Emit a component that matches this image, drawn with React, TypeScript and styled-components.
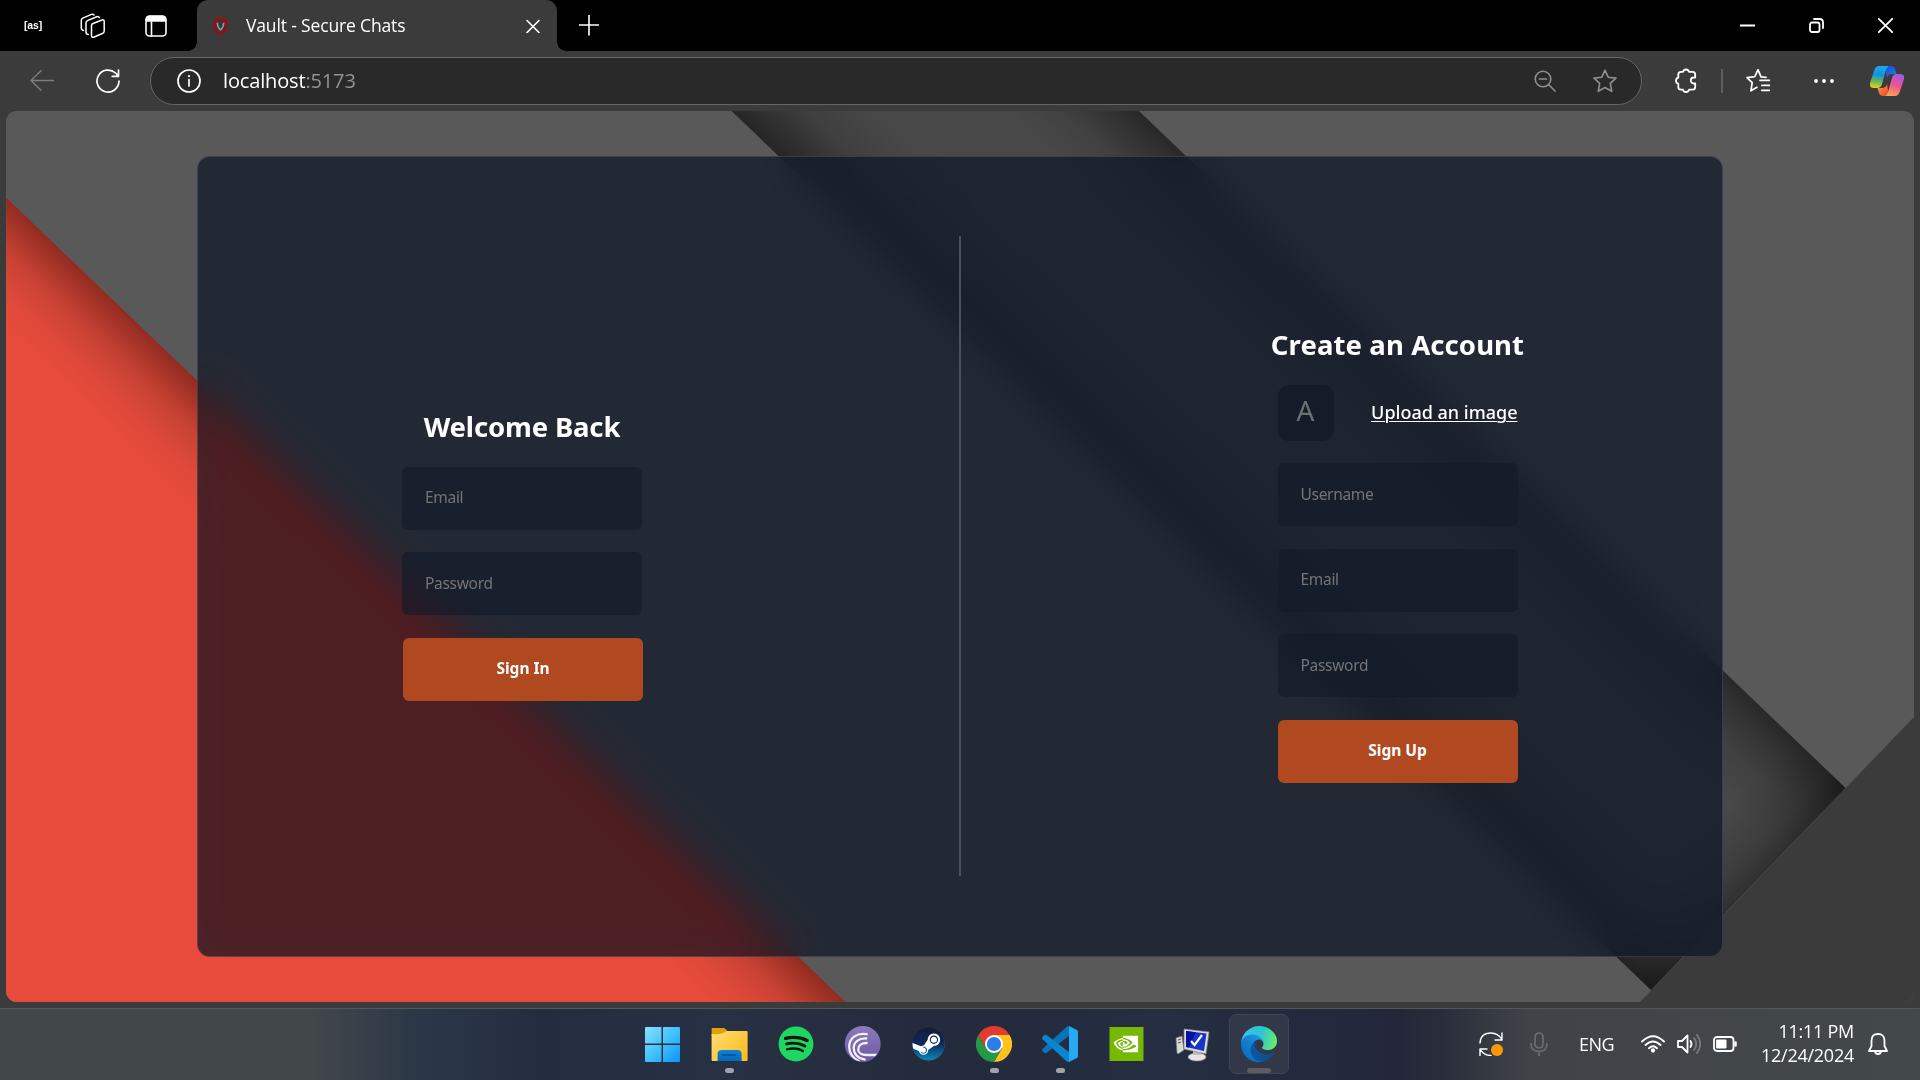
import React from "react";
import styled, { createGlobalStyle } from "styled-components";
import { SiBittorrent, SiNvidia } from "react-icons/si";
import { FaSpotify, FaSteam } from "react-icons/fa";

const ui = `"Open Sans", "Noto Sans", sans-serif`;
const humanist = `"Noto Sans", "Open Sans", sans-serif`;

const GlobalStyle = createGlobalStyle`
  * { box-sizing: border-box; }
  html, body { margin: 0; background: #3b3b3b; overflow: hidden; }
  button, input { font: inherit; border: 0; outline: 0; }
  svg { display: block; flex: none; }
`;

const Desktop = styled.div`
  width: 1920px;
  height: 1080px;
  display: flex;
  flex-direction: column;
  background: #3b3b3b;
  color: #fff;
  font-family: ${ui};
`;

const TitleBar = styled.header`
  height: 51px;
  display: flex;
  align-items: center;
  background: #000;
`;

const Slot = styled.span<{ $before?: number; $width: number }>`
  flex: none;
  display: flex;
  justify-content: center;
  margin-left: ${(p) => p.$before ?? 0}px;
  width: ${(p) => p.$width}px;
`;

const Profile = styled(Slot)`
  padding-bottom: 2px;
  font-family: "Liberation Sans Narrow", "Liberation Sans", sans-serif;
  font-size: 10.5px;
  font-weight: 700;
  line-height: 14px;
  letter-spacing: -0.2px;
  white-space: nowrap;
`;

const TabFlank = styled.i<{ $side: "left" | "right" }>`
  align-self: flex-end;
  width: 9px;
  height: 9px;
  margin-left: ${(p) => (p.$side === "left" ? 21 : 0)}px;
  background: radial-gradient(
    circle at ${(p) => (p.$side === "left" ? "0 0" : "100% 0")},
    transparent 8.5px,
    #3b3b3b 9px
  );
`;

const Tab = styled.div`
  width: 360px;
  height: 51px;
  padding: 0 17px 0 16px;
  border-radius: 11px 11px 0 0;
  background: #3b3b3b;
  display: flex;
  align-items: center;
`;

const TabTitle = styled.span`
  flex: 1;
  margin-left: 18px;
  padding-bottom: 1px;
  font-size: 17.5px;
  letter-spacing: -0.15px;
  white-space: nowrap;
`;

const Spacer = styled.span`
  flex: 1;
`;

const WindowButtons = styled.div`
  display: flex;
  align-items: center;
  padding-right: 27px;
`;

const Toolbar = styled.div`
  height: 60px;
  padding-right: 16px;
  display: flex;
  align-items: center;
`;

const AddressBar = styled.div`
  flex: 1;
  height: 48px;
  margin-left: 30px;
  padding: 0 24px 0 26px;
  border: 1.5px solid #666;
  border-radius: 24px;
  background: #292929;
  display: flex;
  align-items: center;
`;

const Url = styled.span`
  flex: 1;
  margin-left: 22px;
  padding-bottom: 1px;
  font-size: 20px;
  letter-spacing: -0.15px;
`;

const Port = styled.span`
  color: #919191;
`;

const Rule = styled.i`
  width: 2px;
  height: 24px;
  margin-left: 24px;
  background: #5e5e5e;
`;

const Viewport = styled.main`
  position: relative;
  width: 1908px;
  height: 891px;
  margin: 0 6px 6px;
  padding-bottom: 1px;
  border-radius: 11px;
  overflow: hidden;
  background: #595959;
  display: flex;
  align-items: center;
  justify-content: center;
`;

const Wallpaper = styled.svg`
  position: absolute;
  inset: 0;
`;

const Card = styled.section`
  width: 1526px;
  height: 801px;
  display: flex;
  align-items: center;
  border: 1px solid rgba(255, 255, 255, 0.125);
  border-radius: 13px;
  background: rgba(17, 25, 40, 0.75);
  backdrop-filter: blur(19px) saturate(180%);
  font-family: ${humanist};
`;

const Pane = styled.div<{ $side: "left" | "right" }>`
  width: 761px;
  display: flex;
  flex-direction: column;
  align-items: center;
  padding: ${(p) => (p.$side === "left" ? "0 113px 3px 0" : "0 0 3px 112px")};
`;

const Separator = styled.i`
  width: 2px;
  height: 640px;
  background: #4b5059;
`;

const Heading = styled.h2<{ $spacing: number }>`
  margin: 0 0 22px;
  font-size: 27.5px;
  line-height: 36px;
  font-weight: 700;
  letter-spacing: ${(p) => p.$spacing}px;
  white-space: nowrap;
`;

const Form = styled.form`
  width: 240px;
  display: flex;
  flex-direction: column;
  gap: 22.5px;
`;

const Field = styled.input`
  width: 240px;
  height: 63px;
  padding: 0 23px 2px;
  border-radius: 6px;
  background: rgba(17, 25, 40, 0.6);
  color: #fff;
  font-size: 15.5px;
  letter-spacing: -0.3px;
  &::placeholder {
    color: #757575;
    opacity: 1;
  }
`;

const Submit = styled.button<{ $shift?: number }>`
  width: 240px;
  height: 63px;
  margin-left: ${(p) => p.$shift ?? 0}px;
  padding: 0 0 3px;
  border-radius: 6px;
  background: #b04820;
  color: #fff;
  font-size: 15.5px;
  font-weight: 700;
`;

const AvatarRow = styled.label`
  height: 56px;
  display: flex;
  align-items: center;
  justify-content: space-between;
`;

const Avatar = styled.span`
  width: 56px;
  height: 56px;
  border-radius: 11px;
  background: rgba(17, 25, 40, 0.7);
  color: #6d6f73;
  font-size: 28px;
  line-height: 51px;
  text-align: center;
`;

const UploadText = styled.span`
  font-size: 18px;
  font-weight: 500;
  line-height: 24px;
  padding-bottom: 1px;
  text-decoration: underline;
  text-decoration-thickness: 1px;
  text-underline-offset: 2px;
  white-space: nowrap;
`;

const Taskbar = styled.footer`
  height: 72px;
  display: flex;
  align-items: stretch;
  border-top: 1px solid #54575a;
  background: linear-gradient(
    90deg,
    #42474a 0,
    #42474a 310px,
    #2b3747 420px,
    #242d40 540px,
    #283143 720px,
    #232a3b 960px,
    #252e42 1160px,
    #232739 1400px,
    #2a2e3b 1445px,
    #404448 1530px,
    #43484b 1920px
  );
`;

const Apps = styled.nav`
  display: flex;
  margin-left: 630px;
`;

const AppCell = styled.div`
  width: 66.2px;
  display: flex;
  justify-content: center;
`;

const Tile = styled.div<{ $active?: boolean }>`
  width: 60px;
  height: 60px;
  margin-top: 5px;
  padding-top: 11px;
  border-radius: 7px;
  border: 1px solid ${(p) => (p.$active ? "#3e4656" : "transparent")};
  background: ${(p) => (p.$active ? "#323848" : "transparent")};
  display: flex;
  flex-direction: column;
  align-items: center;
  justify-content: space-between;
`;

const Running = styled.i<{ $state: "none" | "open" | "active" }>`
  width: ${(p) => (p.$state === "active" ? 24 : 9)}px;
  height: 5px;
  border-radius: 3px;
  background: ${(p) =>
    p.$state === "none" ? "transparent" : p.$state === "open" ? "#9fa3ab" : "#5f5d5b"};
`;

const Tray = styled.div`
  flex: 1;
  display: flex;
  align-items: center;
  justify-content: flex-end;
  padding: 0 32px 2px 0;
  font-size: 18px;
`;

const Language = styled(Slot)`
  letter-spacing: -0.6px;
`;

const Clock = styled.div`
  width: 117px;
  text-align: right;
  line-height: 24px;
  font-size: 18px;
  letter-spacing: -0.25px;
  margin-bottom: 2px;
`;

type LineProps = {
  w: number;
  h: number;
  stroke?: string;
  width?: number;
  children: React.ReactNode;
};

const Line = ({ w, h, stroke = "#fff", width = 1.6, children }: LineProps) => (
  <svg
    width={w}
    height={h}
    viewBox={`0 0 ${w} ${h}`}
    fill="none"
    stroke={stroke}
    strokeWidth={width}
    strokeLinecap="round"
    strokeLinejoin="round"
  >
    {children}
  </svg>
);

const STAR = "M12 1.2l3.2 7 7.8.9-5.7 5.3 1.5 7.9L12 18.5l-6.8 3.8 1.5-7.9L1 9.1l7.8-.9z";

const CODE =
  "M23.15 2.587L18.21.21a1.494 1.494 0 0 0-1.705.29l-9.46 8.63-4.12-3.128a.999.999 0 0 0-1.276.057L.327 7.261A1 1 0 0 0 .326 8.740L3.899 12 .326 15.260a1 1 0 0 0 .001 1.479L1.650 17.940a.999.999 0 0 0 1.276.057l4.120-3.128 9.460 8.630a1.492 1.492 0 0 0 1.704.29l4.942-2.377A1.500 1.500 0 0 0 24 20.060V3.939a1.500 1.500 0 0 0-.85-1.352zm-5.146 14.861L10.826 12l7.178-5.448v10.896z";

const Background = () => (
  <Wallpaper width="1908" height="891" viewBox="6 111 1908 891">
    <defs>
      <linearGradient id="redEdge" gradientUnits="userSpaceOnUse" x1="426" y1="599" x2="357" y2="671">
        <stop offset="0" stopColor="#922a20" />
        <stop offset=".12" stopColor="#a13226" />
        <stop offset=".4" stopColor="#c84234" />
        <stop offset=".7" stopColor="#de4939" />
        <stop offset="1" stopColor="#e84b3b" />
      </linearGradient>
      <linearGradient id="band" gradientUnits="userSpaceOnUse" x1="1139" y1="111" x2="944.4" y2="314.3">
        <stop offset="0" stopColor="#282828" />
        <stop offset=".07" stopColor="#323232" />
        <stop offset=".18" stopColor="#404040" />
        <stop offset=".32" stopColor="#484848" />
        <stop offset=".65" stopColor="#484848" />
        <stop offset=".82" stopColor="#3f3f3f" />
        <stop offset=".94" stopColor="#2e2e2e" />
        <stop offset="1" stopColor="#262626" />
      </linearGradient>
      <linearGradient id="corner" gradientUnits="userSpaceOnUse" x1="1748" y1="889" x2="1697" y2="840">
        <stop offset="0" stopColor="#000" stopOpacity=".34" />
        <stop offset=".35" stopColor="#000" stopOpacity=".15" />
        <stop offset="1" stopColor="#000" stopOpacity="0" />
      </linearGradient>
    </defs>
    <rect x="6" y="111" width="1908" height="891" fill="#595959" />
    <path d="M6 197.500 L845.500 1002 H6z" fill="url(#redEdge)" />
    <path d="M731.500 111 H1139 L1845.500 788 L1651 990z" fill="url(#band)" />
    <path d="M731.500 111 H1139 L1845.500 788 L1651 990z" fill="url(#corner)" />
    <path d="M1914 717 V1002 H1640z" fill="#3b3b3b" />
  </Wallpaper>
);

const StartIcon = () => (
  <svg width="36" height="36" viewBox="0.5 0 36 36">
    <defs>
      <linearGradient id="win" x1="0" y1="0" x2="36" y2="36" gradientUnits="userSpaceOnUse">
        <stop offset="0" stopColor="#8be2ff" />
        <stop offset=".5" stopColor="#43c2fb" />
        <stop offset="1" stopColor="#0a93fa" />
      </linearGradient>
    </defs>
    <path d="M1.500 1H17v16.500H.5V2a1 1 0 0 1 1-1zM18.500 1H34.500a1 1 0 0 1 1 1V17.500h-17zM.5 19H17v17H1.500a1 1 0 0 1-1-1zM18.500 19h17v16a1 1 0 0 1-1 1h-16z" fill="url(#win)" />
  </svg>
);

const FolderIcon = () => (
  <svg width="36" height="36" viewBox="-0.6 0 36 36" overflow="visible">
    <defs>
      <linearGradient id="fold" x1="0" y1="6" x2="36" y2="35" gradientUnits="userSpaceOnUse">
        <stop offset="0" stopColor="#ffdc70" />
        <stop offset="1" stopColor="#fdbb1c" />
      </linearGradient>
      <linearGradient id="foldBlue" x1="0" y1="24" x2="0" y2="35" gradientUnits="userSpaceOnUse">
        <stop offset="0" stopColor="#0d83da" />
        <stop offset="1" stopColor="#0667b8" />
      </linearGradient>
    </defs>
    <path d="M1 2h11q1.500 0 2.500 1.500L16 6v4H0V3a1 1 0 0 1 1-1z" fill="#e0a00a" />
    <path d="M0 8q7 .5 10-.5t5-2.500h20a1 1 0 0 1 1 1v28a1 1 0 0 1-1 1H1a1 1 0 0 1-1-1z" fill="url(#fold)" />
    <path d="M6 35v-7q0-4 4-4h16q4 0 4 4v7z" fill="url(#foldBlue)" />
    <path d="M11 29h14" stroke="#064d91" strokeWidth="1.600" strokeLinecap="round" />
  </svg>
);

const SpotifyIcon = () => (
  <svg width="36" height="36" viewBox="-1 0 36 36" overflow="visible">
    <circle cx="18" cy="18" r="15" fill="#101712" />
    <FaSpotify size={36} color="#1ed760" />
  </svg>
);

const BitTorrentIcon = () => (
  <svg width="36" height="36" viewBox="-0.7 0 36 36" overflow="visible">
    <defs>
      <linearGradient id="bt" x1="0" y1="0" x2="0" y2="36" gradientUnits="userSpaceOnUse">
        <stop offset="0" stopColor="#8d7bbb" />
        <stop offset="1" stopColor="#6b58a5" />
      </linearGradient>
      <clipPath id="btClip">
        <circle cx="18" cy="18" r="17.500" />
      </clipPath>
    </defs>
    <circle cx="18" cy="18" r="18" fill="url(#bt)" />
    <g clipPath="url(#btClip)" fill="none" stroke="#f1eff8" strokeWidth="2.300" strokeLinecap="round">
      <path d="M22 8.200C12 6.500 4.500 12 4.500 21c0 6 4 11.500 9.500 14" />
      <path d="M21.500 12.500C14 12 9 16 9 22c0 5.500 4 10.500 11 11.500" />
      <path d="M22 17c-5 0-8.500 2.500-8.500 6.500 0 3.500 3.500 5.500 8 5.500h11" />
    </g>
  </svg>
);

const SteamIcon = () => (
  <svg width="36" height="36" viewBox="-1.5 -1 36 36">
    <defs>
      <linearGradient id="steam" x1="0" y1="0" x2="0" y2="500" gradientUnits="userSpaceOnUse">
        <stop offset="0" stopColor="#151a33" />
        <stop offset=".5" stopColor="#0d2a5c" />
        <stop offset="1" stopColor="#0c86b8" />
      </linearGradient>
    </defs>
    <circle cx="17" cy="17" r="16" fill="#fff" />
    <FaSteam size={34} fill="url(#steam)" />
  </svg>
);

const ChromeIcon = () => (
  <svg width="36" height="36" viewBox="0 0 36 36">
    <path d="M18 9h15.600A18 18 0 0 1 18 36l7.800-13.500z" fill="#fcc31e" />
    <path d="M10.200 22.500L2.400 9A18 18 0 0 0 18 36l7.800-13.500z" fill="#279847" />
    <path d="M2.400 9l7.800 13.500L18 9h15.600A18 18 0 0 0 2.400 9z" fill="#e33b2e" />
    <circle cx="18" cy="18" r="9" fill="#fff" />
    <circle cx="18" cy="18" r="7.100" fill="#2b7de9" />
  </svg>
);

const CodeIcon = () => (
  <svg width="36" height="36" viewBox="0 0 24 24">
    <defs>
      <clipPath id="codeRight">
        <path d="M18 0h6v24h-6z" />
      </clipPath>
    </defs>
    <path d={CODE} fill="#0a74b9" />
    <path d="M.33 7.260L1.650 6.060a1 1 0 0 1 1.280-.06L18 17.450V24l-1.500-.5L.33 8.740a1 1 0 0 1 0-1.480z" fill="#0a86d0" />
    <path d={CODE} fill="#27a9f3" clipPath="url(#codeRight)" />
  </svg>
);

const NvidiaIcon = () => (
  <svg width="36" height="36" viewBox="0 0 36 36">
    <rect x="1.500" y="1" width="34" height="34" fill="#76b900" />
    <svg x="5.500" y="5.500" width="25" height="25">
      <SiNvidia size={25} color="#fff" />
    </svg>
  </svg>
);

const ComputerIcon = () => (
  <svg width="36" height="36" viewBox="0 0 36 36">
    <path d="M1 12l6-2 2 14-6 4-1-1z" fill="#d9d9d9" stroke="#777" strokeWidth=".7" />
    <path d="M3 14l3-1M3 17l3-1" stroke="#555" strokeWidth="1" />
    <ellipse cx="22" cy="31" rx="9" ry="4" fill="#e6e6e6" stroke="#888" strokeWidth=".6" />
    <path d="M18 23h8v6h-8z" fill="#bdbdbd" />
    <path d="M9 3l25 3-3 22-22-5z" fill="#dcdcdc" stroke="#888" strokeWidth=".7" />
    <path d="M11 5l20.500 2.500-2.500 17.500-18-4z" fill="#1634c9" />
    <path d="M11 5l10 1.300L14 21.500l-3-.6z" fill="#0712a0" />
    <path d="M16 15l3.500 4L27 9" fill="none" stroke="#fff" strokeWidth="2.200" />
  </svg>
);

const EdgeIcon = () => (
  <svg width="36" height="36" viewBox="4.6 4.6 256 256">
    <defs>
      <linearGradient id="edgeDark" x1="63" y1="178" x2="241" y2="178" gradientUnits="userSpaceOnUse">
        <stop offset="0" stopColor="#0c59a4" />
        <stop offset="1" stopColor="#114a8b" />
      </linearGradient>
      <linearGradient id="edgeBlue" x1="157" y1="80" x2="46" y2="221" gradientUnits="userSpaceOnUse">
        <stop offset="0" stopColor="#1b9de2" />
        <stop offset=".5" stopColor="#127fce" />
        <stop offset="1" stopColor="#0a72c8" />
      </linearGradient>
      <linearGradient id="edgeGreen" x1="20" y1="60" x2="250" y2="130" gradientUnits="userSpaceOnUse">
        <stop offset="0" stopColor="#35c1f1" />
        <stop offset=".5" stopColor="#2fc3d3" />
        <stop offset="1" stopColor="#66eb6e" />
      </linearGradient>
    </defs>
    <path
      d="M235.680 195.460a93.730 93.730 0 0 1-10.540 4.710 101.870 101.870 0 0 1-35.900 6.460c-47.320 0-88.540-32.550-88.540-74.320A31.480 31.480 0 0 1 117.130 105c-42.800 1.800-53.800 46.400-53.800 72.530 0 73.880 68.090 81.370 82.760 81.370 7.910 0 19.840-2.300 27-4.560l1.310-.44a128.340 128.340 0 0 0 66.600-52.800 4 4 0 0 0-5.320-5.640z"
      fill="url(#edgeDark)"
    />
    <path
      d="M110.340 246.340A79.200 79.200 0 0 1 87.600 225a80.720 80.720 0 0 1 29.530-120c3.120-1.470 8.450-4.130 15.540-4a32.350 32.350 0 0 1 25.690 13 31.880 31.880 0 0 1 6.360 18.660c0-.21 24.460-79.600-80-79.600-43.900 0-80 41.660-80 78.210a130.150 130.150 0 0 0 12.110 56 128 128 0 0 0 156.380 67.110 75.550 75.550 0 0 1-62.780-8z"
      fill="url(#edgeBlue)"
    />
    <path
      d="M156.940 153.780c-.81 1.050-3.300 2.500-3.300 5.660 0 2.610 1.700 5.120 4.720 7.230 14.380 10 41.490 8.680 41.560 8.680a59.560 59.560 0 0 0 30.270-8.350A61.380 61.380 0 0 0 260.660 114c.26-22.410-8-37.310-11.340-43.910-21.190-41.400-66.880-65.200-116.590-65.200a128 128 0 0 0-128 126.200c.48-36.540 36.800-66.050 80-66.050 3.500 0 23.460.34 42 10.070 16.340 8.580 24.900 18.940 30.850 29.210 6.180 10.670 7.280 24.150 7.280 29.520s-2.740 13.330-7.940 20.100z"
      fill="url(#edgeGreen)"
    />
  </svg>
);

const CopilotIcon = () => (
  <svg width="34" height="30" viewBox="0 0 34 30">
    <defs>
      <linearGradient id="cpA" x1="8" y1="0" x2="5" y2="22" gradientUnits="userSpaceOnUse">
        <stop offset="0" stopColor="#1ba6f3" />
        <stop offset=".4" stopColor="#1493dc" />
        <stop offset=".7" stopColor="#66b957" />
        <stop offset="1" stopColor="#f7cb12" />
      </linearGradient>
      <linearGradient id="cpB" x1="30" y1="8" x2="22" y2="30" gradientUnits="userSpaceOnUse">
        <stop offset="0" stopColor="#9f5bea" />
        <stop offset=".5" stopColor="#ee5095" />
        <stop offset="1" stopColor="#fda052" />
      </linearGradient>
      <linearGradient id="cpC" x1="18" y1="0" x2="26" y2="9" gradientUnits="userSpaceOnUse">
        <stop offset="0" stopColor="#1f4fd8" />
        <stop offset="1" stopColor="#1c7cec" />
      </linearGradient>
      <linearGradient id="cpD" x1="9" y1="22" x2="17" y2="30" gradientUnits="userSpaceOnUse">
        <stop offset="0" stopColor="#fb8a3c" />
        <stop offset="1" stopColor="#ee4432" />
      </linearGradient>
    </defs>
    <path d="M15 0h6q3 0 4 3l1.500 5H22q-4 0-5 4z" fill="url(#cpC)" />
    <path d="M19 30h-6q-3 0-4-3l-1.500-5H12q4 0 5-4z" fill="url(#cpD)" />
    <path d="M9 0h10q-2 .5-3 4l-4 14q-1 4-5 4H4q-5 0-4-5L4 5Q5.500 0 9 0z" fill="url(#cpA)" />
    <path d="M25 30H15q2-.5 3-4l4-14q1-4 5-4h3q5 0 4 5l-4 12q-1.500 5-5 5z" fill="url(#cpB)" />
  </svg>
);

type AppEntry = { name: string; icon: React.ReactNode; state: "none" | "open" | "active" };

const apps: AppEntry[] = [
  { name: "start", icon: <StartIcon />, state: "none" },
  { name: "files", icon: <FolderIcon />, state: "open" },
  { name: "spotify", icon: <SpotifyIcon />, state: "none" },
  { name: "bittorrent", icon: <BitTorrentIcon />, state: "none" },
  { name: "steam", icon: <SteamIcon />, state: "none" },
  { name: "chrome", icon: <ChromeIcon />, state: "open" },
  { name: "code", icon: <CodeIcon />, state: "open" },
  { name: "nvidia", icon: <NvidiaIcon />, state: "none" },
  { name: "computer", icon: <ComputerIcon />, state: "none" },
  { name: "edge", icon: <EdgeIcon />, state: "active" },
];

export default function App() {
  return (
    <>
      <GlobalStyle />
      <Desktop>
        <TitleBar>
          <Profile $before={24} $width={18}>[as]</Profile>
          <Slot $before={38} $width={26}>
            <Line w={26} h={26} width={1.5}>
              <path d="M11.500 12.500q0-1.500 1.500-2l9-3.500q2.200-.7 2.200 1.500v9.500q0 1.500-1.300 2.200l-8.700 3.800q-2.700 1-2.700-1.500z" />
              <path d="M8.300 21.500q-2.300-.3-2.300-2.500V9.800q0-1.500 1.400-2.200l9.300-3.900q2-.6 2.500.9" />
              <path d="M3.500 17.500Q1.300 17 1.300 15V7.300q0-1.500 1.400-2.200l8.800-3.700q2-.7 2.500.7" />
            </Line>
          </Slot>
          <Slot $before={39} $width={22}>
            <Line w={22} h={22} width={1.6}>
              <rect x="1" y="1" width="20" height="20" rx="3.500" />
              <path d="M1.500 6V4.500q0-3 3-3h13q3 0 3 3V6z" fill="#fff" />
              <path d="M6.500 7v14" />
            </Line>
          </Slot>
          <TabFlank $side="left" />
          <Tab>
            <svg width="15" height="18" viewBox="0 0 15 18">
              <path d="M7.500 1.200L13 3.200Q14.200 11 11.500 14L7.500 16.800 3.500 14Q.8 11 2 3.200z" fill="#37373a" stroke="#b00510" strokeWidth="2" strokeLinejoin="round" />
              <path d="M4.300 5.800q.4 5.200 3.200 7 2.800-1.800 3.200-7" fill="none" stroke="#999" strokeWidth="1.600" />
            </svg>
            <TabTitle>Vault - Secure Chats</TabTitle>
            <Line w={14} h={14} width={1.6}>
              <path d="M1 1.500l12 12M13 1.500l-12 12" />
            </Line>
          </Tab>
          <TabFlank $side="right" />
          <Slot $before={13} $width={20}>
            <Line w={20} h={22} width={1.6}>
              <path d="M10 0v20M0 10h20" />
            </Line>
          </Slot>
          <Spacer />
          <WindowButtons>
            <Slot $width={15}>
              <Line w={15} h={16} width={1.8}>
                <path d="M0 7.500h15" />
              </Line>
            </Slot>
            <Slot $before={54} $width={15}>
              <Line w={15} h={15} width={1.8}>
                <rect x="1" y="4.500" width="9.500" height="9.500" rx="2" />
                <path d="M5 1h5.500q3.500 0 3.500 3.500V10" />
              </Line>
            </Slot>
            <Slot $before={54} $width={15}>
              <Line w={15} h={15} width={1.8}>
                <path d="M.8.8l13.400 13.400M14.200.8L.8 14.200" />
              </Line>
            </Slot>
          </WindowButtons>
        </TitleBar>

        <Toolbar>
          <Slot $before={30} $width={24}>
            <Line w={24} h={22} stroke="#7d7d7d" width={1.5}>
              <path d="M23.500 10.500H1M11 .8L1 10.500l10 9.700" />
            </Line>
          </Slot>
          <Slot $before={42} $width={24}>
            <Line w={24} h={24} width={1.7}>
              <path d="M23 12A11 11 0 1 1 19.500 4L22.300 6.800M22.500 1v6.300h-6.300" />
            </Line>
          </Slot>
          <AddressBar>
            <Line w={24} h={24} width={1.7}>
              <circle cx="12" cy="12" r="11" />
              <path d="M12 10.500v6.500" />
              <path d="M12 7v.2" strokeWidth="2" />
            </Line>
            <Url>
              localhost<Port>:5173</Port>
            </Url>
            <Line w={22} h={22} stroke="#8f8f8f" width={1.6}>
              <circle cx="9" cy="9" r="7.800" />
              <path d="M5.500 9h7M14.800 14.800l6.200 6.200" />
            </Line>
            <Slot $before={37} $width={24}>
              <Line w={24} h={24} stroke="#8f8f8f" width={1.6}>
                <path d={STAR} />
              </Line>
            </Slot>
          </AddressBar>
          <Slot $before={32} $width={23}>
            <Line w={23} h={26} width={1.8}>
              <path d="M9 3.800a3.100 3.100 0 0 1 6 0H18.500q2.700 0 2.700 2.700v3h-1.400a3 3 0 0 0 0 6h1.400v3.500q0 2.700-2.700 2.700H15a3.100 3.100 0 0 1-6 0H7q-2.700 0-2.700-2.700v-3.300a3.100 3.100 0 0 1 0-6V6.500q0-2.700 2.700-2.700z" />
            </Line>
          </Slot>
          <Rule />
          <Slot $before={23} $width={24}>
            <Line w={24} h={24} width={1.7}>
              <path d="M20 8.800l-5-.5-3-7.100-3.200 7L1 9.100l5.200 5-1.300 8.200 6.100-3.500M14 11.800H24M15.800 16.800H24M15.800 21.800H24" transform="translate(0 -.5)" />
            </Line>
          </Slot>
          <Slot $before={44} $width={20}>
            <svg width="20" height="4" viewBox="0 0 20 4" fill="#fff">
              <circle cx="2" cy="2" r="1.900" />
              <circle cx="10" cy="2" r="1.900" />
              <circle cx="18" cy="2" r="1.900" />
            </svg>
          </Slot>
          <Slot $before={36} $width={34}>
            <CopilotIcon />
          </Slot>
        </Toolbar>

        <Viewport>
          <Background />
          <Card>
            <Pane $side="left">
              <Heading $spacing={-0.15}>Welcome Back</Heading>
              <Form>
                <Field placeholder="Email" />
                <Field placeholder="Password" />
                <Submit type="button" $shift={1}>Sign In</Submit>
              </Form>
            </Pane>
            <Separator />
            <Pane $side="right">
              <Heading $spacing={0.1}>Create an Account</Heading>
              <Form>
                <AvatarRow>
                  <Avatar>A</Avatar>
                  <UploadText>Upload an image</UploadText>
                </AvatarRow>
                <Field placeholder="Username" />
                <Field placeholder="Email" />
                <Field placeholder="Password" />
                <Submit type="button">Sign Up</Submit>
              </Form>
            </Pane>
          </Card>
        </Viewport>

        <Taskbar>
          <Apps>
            {apps.map((app) => (
              <AppCell key={app.name}>
                <Tile $active={app.state === "active"}>
                  {app.icon}
                  <Running $state={app.state} />
                </Tile>
              </AppCell>
            ))}
          </Apps>
          <Tray>
            <Slot $width={24}>
              <Line w={24} h={24} width={1.4}>
                <path d="M1 11Q1.500 1 12 1q7 0 11 6.500M23 1v7h-7M1 24v-7h7M1 17q3.500 6.500 11 6.500" />
                <circle cx="18" cy="18" r="6" fill="#ff9800" stroke="none" />
              </Line>
            </Slot>
            <Slot $before={27} $width={18}>
              <Line w={18} h={24} stroke="#6b6d70" width={1.7}>
                <rect x="5" y="1" width="8" height="15" rx="4" />
                <path d="M1 11.500q0 8 8 8t8-8M9 19.500V24" />
              </Line>
            </Slot>
            <Language $before={31} $width={35}>ENG</Language>
            <Slot $before={27} $width={24}>
              <Line w={24} h={18} width={1.9}>
                <path d="M1 6.500Q12-4 23 6.500M4.500 10Q12 3 19.500 10M8 13.200q4-3.700 8 0" />
                <circle cx="12" cy="15.500" r="1.200" fill="#fff" />
              </Line>
            </Slot>
            <Slot $before={12} $width={24}>
              <Line w={24} h={20} width={1.8}>
                <path d="M1 7h4l5.500-5.500v17L5 13H1z" />
                <path d="M13.500 7q2 3 0 6" />
                <path d="M17 4q4.500 6 0 12M20 1q6.500 9 0 18" stroke="#777a7d" />
              </Line>
            </Slot>
            <Slot $before={12} $width={24}>
              <Line w={24} h={16} width={1.8}>
                <rect x="1" y="1" width="19.500" height="14" rx="3" />
                <rect x="4" y="4" width="9" height="8" fill="#fff" strokeWidth="1" />
                <path d="M22.500 6.500v3" strokeWidth="2.500" />
              </Line>
            </Slot>
            <Clock>
              11:11 PM
              <br />
              12/24/2024
            </Clock>
            <Slot $before={14} $width={20}>
              <Line w={20} h={22} width={1.8}>
                <path d="M10 1q-6.500 0-6.500 7v5L1 18h18l-2.500-5V8q0-7-6.500-7zM7 18.500q.5 2.500 3 2.500t3-2.500" />
              </Line>
            </Slot>
          </Tray>
        </Taskbar>
      </Desktop>
    </>
  );
}
